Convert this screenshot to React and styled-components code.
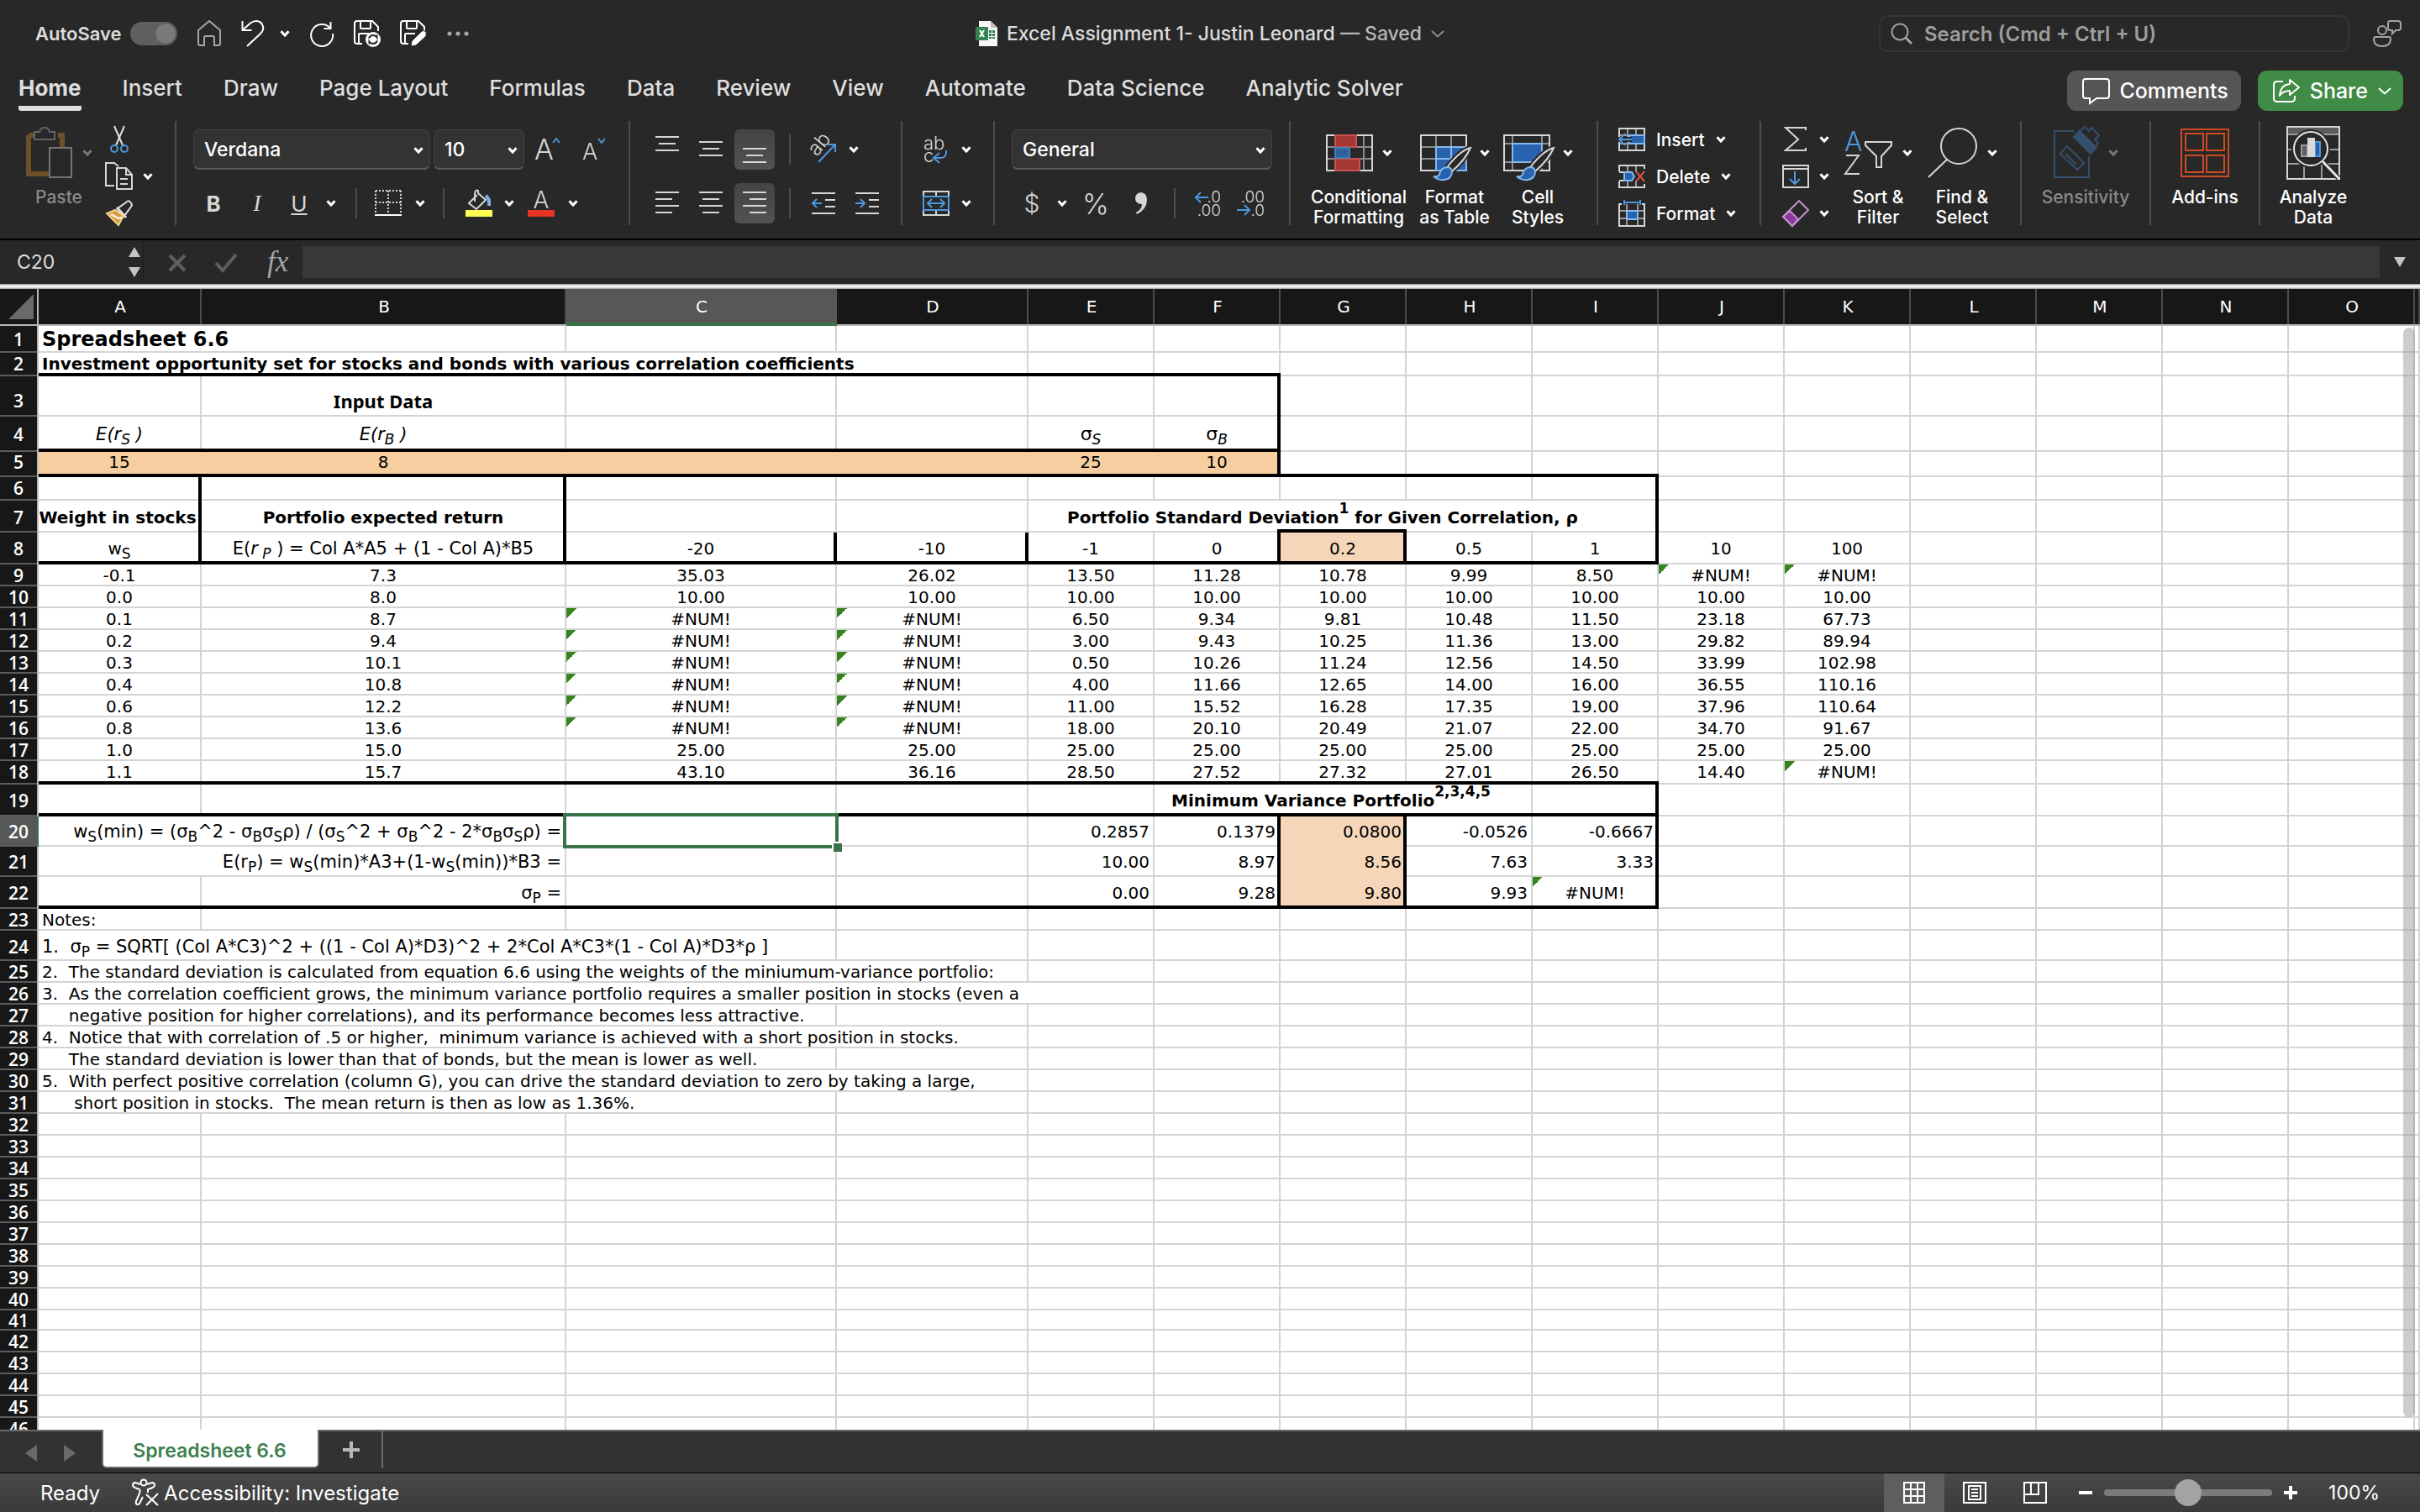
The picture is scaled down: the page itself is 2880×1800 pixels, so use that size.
import React from "react";
import styled, { createGlobalStyle, css } from "styled-components";

const UI_FONT = `Inter, "Liberation Sans", sans-serif`;
const SHEET_FONT = `"DejaVu Sans", "Liberation Sans", sans-serif`;
const BLUE = "#4f97dc";
const LIGHT = "#d6d6d6";
const GREEN = "#39734a";
const GRID = "#d4d4d4";

const GlobalStyle = createGlobalStyle`
  *, *::before, *::after {
    box-sizing: border-box;
  }
  body {
    margin: 0;
    background: #282828;
  }
  button, input, select {
    font: inherit;
    color: inherit;
    margin: 0;
    padding: 0;
    border: none;
    background: none;
  }
  svg {
    display: block;
    flex: none;
    overflow: visible;
  }
`;

const Window = styled.div`
  display: flex;
  flex-direction: column;
  height: 100vh;
  overflow: hidden;
  font-family: ${UI_FONT};
  color: #fff;
  background: #282828;
`;

/* ---------- title bar ---------- */

const TitleBar = styled.header`
  display: grid;
  grid-template-columns: 1fr auto 1fr;
  align-items: center;
  height: 80px;
  padding: 0 22px;
  color: #dcdcdc;
`;

const QuickAccess = styled.div`
  display: flex;
  align-items: center;
  gap: 23px;
  padding-left: 20px;
`;

const QuickButton = styled.button`
  display: flex;
  align-items: center;
  gap: 18px;
  height: 36px;
`;

const AutoSave = styled.label`
  display: flex;
  align-items: center;
  gap: 10px;
  font-size: 22px;
  font-weight: 600;
`;

const Switch = styled.input`
  appearance: none;
  display: flex;
  align-items: center;
  justify-content: flex-end;
  width: 56px;
  height: 28px;
  padding: 0 1px;
  border-radius: 14px;
  background: #5f5f5f;

  &::after {
    content: "";
    width: 26px;
    height: 26px;
    border-radius: 50%;
    background: #7a7a7a;
    border: 1px solid #555;
  }
`;

const DocumentName = styled.button`
  display: flex;
  align-items: center;
  gap: 11px;
  font-size: 23px;
  font-weight: 500;

  small {
    font-size: 23px;
    color: #b9b9b9;
  }
`;

const TitleRight = styled.div`
  display: flex;
  align-items: center;
  justify-content: flex-end;
  gap: 28px;
`;

const SearchBox = styled.label`
  display: flex;
  align-items: center;
  gap: 14px;
  width: 560px;
  height: 44px;
  padding: 0 12px;
  border: 2px solid #353535;
  border-radius: 10px;

  input {
    flex: 1;
    min-width: 0;
    font-size: 24px;
    font-weight: 600;
    outline: none;
  }
  input::placeholder {
    color: #9d9d9d;
    opacity: 1;
  }
`;

/* ---------- tabs ---------- */

const TabBar = styled.nav`
  display: flex;
  align-items: flex-start;
  height: 64px;
  padding: 0 20px 0 22px;
  gap: 49px;
`;

const RibbonTab = styled.button`
  height: 52px;
  font-size: 26px;
  line-height: 42px;
  padding-top: 4px;
  font-weight: ${({ $active }) => ($active ? 700 : 500)};
  color: #dedede;
  border-bottom: 6px solid ${({ $active }) => ($active ? "#dedede" : "transparent")};
  border-radius: 3px;
`;

const TabActions = styled.div`
  display: flex;
  gap: 20px;
  margin: 4px 0 0 auto;
`;

const ActionButton = styled.button`
  display: flex;
  align-items: center;
  gap: ${({ $green }) => ($green ? 12 : 11)}px;
  height: 48px;
  padding: 0 ${({ $green }) => ($green ? 14 : 15)}px 0 18px;
  border-radius: 11px;
  font-size: 25px;
  font-weight: 500;
  background: ${({ $green }) => ($green ? "#408b45" : "#555")};
`;

/* ---------- ribbon ---------- */

const Ribbon = styled.section`
  display: flex;
  height: 142px;
  padding-bottom: 16px;
  border-bottom: 2px solid #000;
`;

const Group = styled.div`
  display: flex;
  width: ${({ $w }) => $w}px;
  padding-left: ${({ $pad = 0 }) => $pad}px;
  justify-content: ${({ $center }) => ($center ? "center" : "flex-start")};
  gap: ${({ $gap = 0 }) => $gap}px;
  border-right: ${({ $last }) => ($last ? "none" : "2px solid #4d4d4d")};
`;

const TwoRows = styled.div`
  display: flex;
  flex-direction: column;
  gap: 16px;
  padding-top: 10px;
`;

const ThreeRows = styled.div`
  display: flex;
  flex-direction: column;

  > * {
    flex: none;
  }
`;

const ToolRow = styled.div`
  display: flex;
  align-items: center;
  height: ${({ $h = 48 }) => $h}px;
`;

const Tool = styled.button`
  display: flex;
  align-items: center;
  justify-content: center;
  width: ${({ $w }) => $w}px;
  height: 100%;
  font-size: ${({ $size = 26 }) => $size}px;
  font-weight: ${({ $weight = 300 }) => $weight};
  color: ${LIGHT};
  border-radius: 6px;
  ${({ $on }) =>
    $on &&
    css`
      background: linear-gradient(#444, #525252);
    `}
`;

const ItalicMark = styled.i`
  font-family: "Liberation Serif", serif;
  font-size: 28px;
`;

const Divider = styled.span`
  display: flex;
  justify-content: center;
  width: ${({ $w }) => $w}px;

  &::before {
    content: "";
    width: 2px;
    height: 36px;
    background: #4d4d4d;
  }
`;

const SelectBox = styled.span`
  position: relative;
  width: ${({ $w }) => $w}px;
  height: 48px;
  margin-right: ${({ $gap = 0 }) => $gap}px;

  select {
    appearance: none;
    width: 100%;
    height: 100%;
    padding: 0 12px;
    font-size: 23px;
    font-weight: 500;
    color: #fff;
    background: #333;
    border: 1px solid #414141;
    border-bottom: 2px solid #5a5a5a;
    border-radius: 7px;
  }
  svg {
    position: absolute;
    right: 8px;
    top: 21px;
    pointer-events: none;
  }
`;

const LineButton = styled.button`
  display: flex;
  align-items: center;
  gap: 13px;
  height: 44px;
  font-size: 21px;
  font-weight: 500;
`;

const BigButton = styled.button`
  display: flex;
  flex-direction: column;
  align-items: center;
  width: ${({ $w }) => $w}px;
  padding-top: 6px;
  font-size: 21px;
  line-height: 24px;
  font-weight: 500;
  text-align: center;
  color: ${({ $dim }) => ($dim ? "#8a8a8a" : "#fff")};

  span {
    flex: none;
  }
`;

const BigIcon = styled.span`
  display: flex;
  align-items: center;
  gap: 11px;
  height: 64px;
  margin-bottom: 9px;
`;

/* ---------- formula bar ---------- */

const FormulaBar = styled.section`
  display: flex;
  align-items: center;
  height: 52px;
`;

const NameBox = styled.div`
  display: flex;
  align-items: center;
  width: 172px;
  height: 50px;
  padding: 0 3px 0 20px;
  border-right: 2px solid #202020;
  font-size: 23px;

  input {
    flex: 1;
    min-width: 0;
    color: #dedede;
    outline: none;
  }
`;

const FormulaTools = styled.div`
  display: flex;
  align-items: center;
  justify-content: space-between;
  width: 188px;
  padding: 2px 12px 0 28px;
`;

const FormulaInput = styled.input`
  flex: 1;
  min-width: 0;
  height: 38px;
  padding: 0 8px;
  font-size: 22px;
  background: #383838;
  outline: none;
`;

const ExpandButton = styled.button`
  display: flex;
  justify-content: center;
  width: 48px;
`;

const Edge = styled.div`
  height: 6px;
  background: linear-gradient(#9a9a9a, #f4f4f4 40%, #f4f4f4 60%, #9a9a9a);
`;

/* ---------- sheet ---------- */

const SheetArea = styled.main`
  position: relative;
  flex: 1;
  min-height: 0;
  overflow: hidden;
  background: #fff;
`;

const SheetTable = styled.table`
  width: 100%;
  table-layout: fixed;
  border-collapse: separate;
  border-spacing: 0;
  font-family: ${SHEET_FONT};
  font-size: 20px;
  line-height: 22px;
  color: #000;
`;

const ColHead = styled.th`
  height: 44px;
  padding: 0 0 2px;
  font-size: 20px;
  font-weight: 400;
  color: #fff;
  background: ${({ $on }) => ($on ? "#575757" : "#171717")};
  box-shadow: ${({ $on }) =>
    $on ? `inset 0 -4px ${GREEN}` : "inset 0 -2px #b9b9b9, inset -2px 0 #4c4c4c"};
`;

const Corner = styled(ColHead)`
  box-shadow: inset 0 -2px #b9b9b9, inset -2px 0 #b9b9b9;
  padding: 0 5px 2px 10px;
`;

const RowHead = styled.th`
  height: ${({ $h }) => $h}px;
  padding: 0 2px ${({ $pad }) => $pad}px 0;
  vertical-align: bottom;
  font-family: "Open Sans", "Noto Sans", sans-serif;
  font-size: 21px;
  font-weight: 600;
  text-align: center;
  color: #fff;
  background: ${({ $on }) => ($on ? "#575757" : "#171717")};
  box-shadow: inset -2px 0 ${({ $on }) => ($on ? GREEN : "#b9b9b9")}, inset 0 -2px #5c5c5c;
`;

const Cell = styled.td`
  position: relative;
  padding: 0 ${({ $align, $shift }) => $shift || ($align === "center" ? 2 : 6)}px
    ${({ $pad }) => $pad}px ${({ $align }) => ($align === "center" ? 0 : 4)}px;
  vertical-align: bottom;
  white-space: pre;
  text-align: ${({ $align = "left" }) => $align};
  font-family: ${({ $font }) => $font};
  font-weight: ${({ $bold }) => ($bold ? 700 : 400)};
  font-size: ${({ $size = 20 }) => $size}px;
  background-color: ${({ $fill = "transparent" }) => $fill};
  box-shadow: ${({ $lines }) => $lines};
  ${({ $error }) =>
    $error &&
    css`
      background-image: linear-gradient(to bottom right, #37831f 50%, transparent 50%);
      background-size: 12px 12px;
      background-repeat: no-repeat;
    `}

  sub, sup {
    font-size: 17px;
    line-height: 0;
  }
  sup {
    vertical-align: 12px;
  }
`;

const Selection = styled.span`
  position: absolute;
  inset: -4px -2px -2px -4px;
  border: 4px solid ${GREEN};
  z-index: 1;

  &::after {
    content: "";
    position: absolute;
    right: -8px;
    bottom: -8px;
    width: 12px;
    height: 12px;
    background: ${GREEN};
    border: solid #fff;
    border-width: 2px 0 0 2px;
  }
`;

const TopEdge = styled.span`
  position: absolute;
  inset: -4px 0 auto -4px;
  height: 4px;
  background: #000;
`;

const ScrollThumb = styled.div`
  position: absolute;
  top: 46px;
  right: 6px;
  bottom: 15px;
  width: 14px;
  border-radius: 7px;
  background: rgba(150, 150, 150, 0.48);
`;

/* ---------- bottom bars ---------- */

const SheetTabs = styled.nav`
  display: flex;
  height: 52px;
  background: #323232;
  border-bottom: 1px solid #000;
`;

const TabNav = styled.div`
  display: flex;
  align-items: center;
  gap: 32px;
  width: 121px;
  padding: 2px 0 0 30px;
  border-top: 2px solid #6a6a6a;
`;

const SheetTab = styled.button`
  width: 259px;
  height: 46px;
  padding: 6px 2px 0 0;
  font-size: 23px;
  font-weight: 600;
  color: #3d8050;
  background: #fff;
  border: 2px solid #6a6a6a;
  border-top: none;
  border-radius: 0 0 6px 6px;
`;

const AddSheet = styled.div`
  flex: 1;
  border-top: 2px solid #6a6a6a;

  button {
    display: flex;
    align-items: center;
    justify-content: center;
    width: 76px;
    height: 44px;
    padding-left: 2px;
    border-right: 2px solid #6a6a6a;
  }
`;

const StatusBar = styled.footer`
  display: flex;
  align-items: stretch;
  height: 46px;
  padding: 0 48px;
  font-size: 24px;
  background: linear-gradient(#494949, #3a3a3a);
`;

const StatusText = styled.span`
  display: flex;
  align-items: center;
  gap: 6px;
  margin-right: 38px;
`;

const ViewButtons = styled.div`
  display: flex;
  margin-left: auto;
`;

const ViewButton = styled.button`
  display: flex;
  align-items: center;
  justify-content: center;
  width: 72px;
  background: ${({ $on }) => ($on ? "#5e5e5e" : "transparent")};
`;

const Zoom = styled.div`
  display: flex;
  align-items: center;
  gap: 14px;
  margin-left: 16px;

  input {
    appearance: none;
    width: 200px;
    height: 8px;
    border-radius: 4px;
    background: #7b7b7b;
  }
  input::-webkit-slider-thumb {
    appearance: none;
    width: 32px;
    height: 32px;
    border-radius: 50%;
    background: #a3a3a3;
  }
  output {
    width: 64px;
    margin-left: 20px;
    text-align: right;
    font-size: 23px;
  }
`;

/* ---------- icons ---------- */

const Svg = ({ w, h, children, stroke = LIGHT, sw = 2, ...rest }) => (
  <svg
    width={w}
    height={h}
    viewBox={`0 0 ${w} ${h}`}
    fill="none"
    stroke={stroke}
    strokeWidth={sw}
    aria-hidden="true"
    {...rest}
  >
    {children}
  </svg>
);

const Chevron = ({ color = "#fff", thin }) => (
  <Svg w={thin ? 16 : 12} h={8} stroke={color} sw={thin ? 2 : 3}>
    <path d={thin ? "M1 1l7 6.500 7-6.500" : "M1.500 1.200L6 6l4.500-4.800"} />
  </Svg>
);

const HomeIcon = () => (
  <Svg w={30} h={32} stroke="#a5a5a5">
    <path d="M2 12L15 1l13 11v16q0 2-2 2h-5v-9q0-2-2-2h-8q-2 0-2 2v9H4q-2 0-2-2z" />
  </Svg>
);

const UndoIcon = () => (
  <Svg w={28} h={32} stroke="#fff">
    <path d="M1.500 1v11h11M2 11.500L11 3.500C16 0 22 0 25 5c2.500 4.500 1 8-2 11L7 31" />
  </Svg>
);

const RedoIcon = () => (
  <Svg w={30} h={30} stroke="#fff">
    <path d="M25.500 1v8h-8M25 8.500A13 13 0 1 0 28 15" />
  </Svg>
);

const SaveBase = () => (
  <path d="M10 28H4q-3 0-3-3V4q0-3 3-3h18l7 7v5M8 1v8q0 1 1 1h10q1 0 1-1V1M6 28V17q0-1 1-1h11" />
);

const SaveSyncIcon = () => (
  <Svg w={32} h={32} stroke="#fff">
    <SaveBase />
    <circle cx="23" cy="23" r="9" fill="#fff" stroke="none" />
    <path d="M18 21.500q1.500-3.500 5-3.500 3 0 4.500 2.500v-3M28 24.500q-1.500 3.500-5 3.500-3 0-4.500-2.500v3" stroke="#282828" />
  </Svg>
);

const SaveEditIcon = () => (
  <Svg w={32} h={32} stroke="#fff">
    <SaveBase />
    <path d="M26 13L14 25l-1 6 6-1 12-11q1-5-1-6-2-1-4 0z" fill="#fff" stroke="#282828" strokeWidth="1" />
  </Svg>
);

const DotsIcon = () => (
  <Svg w={28} h={8} stroke="none">
    <circle cx="4" cy="4" r="2.600" fill="#a5a5a5" />
    <circle cx="14" cy="4" r="2.600" fill="#a5a5a5" />
    <circle cx="24" cy="4" r="2.600" fill="#a5a5a5" />
  </Svg>
);

const FileIcon = () => (
  <Svg w={26} h={30} stroke="none">
    <path d="M4 0h14l8 8v22H4z" fill="#f6f6f6" />
    <path d="M18 0v8h8z" fill="#bdbdbd" />
    <path d="M16 11h3v3h-3zM20 11h3v3h-3zM16 15h3v3h-3zM20 15h3v3h-3zM16 19h3v2h-3zM20 19h3v2h-3z" fill="#2f7d4c" />
    <rect x="0" y="7" width="15" height="16" rx="1" fill="#358350" />
    <path d="M5 11l5 8M10 11l-5 8" stroke="#fff" strokeWidth="2" />
  </Svg>
);

const SearchIcon = () => (
  <Svg w={26} h={26} stroke="#a5a5a5">
    <circle cx="11" cy="11" r="9.500" />
    <path d="M18 18l7 7" strokeWidth="3" />
  </Svg>
);

const PresenceIcon = () => (
  <Svg w={34} h={32} stroke="#a5a5a5">
    <circle cx="11" cy="12" r="5" />
    <path d="M3 20h16q2 0 2 2c0 6-4 9-10 9s-10-3-10-9q0-2 2-2z" />
    <path d="M20 1h10q3 0 3 3v5q0 3-3 3h-3l-4 4v-4h-3q-2 0-2-3V4q0-3 2-3z" />
  </Svg>
);

const CommentIcon = () => (
  <Svg w={33} h={32} stroke="#fff">
    <path d="M4 2h25q3 0 3 3v17q0 3-3 3H17l-8 6v-6H4q-3 0-3-3V5q0-3 3-3z" />
  </Svg>
);

const ShareIcon = () => (
  <Svg w={32} h={30} stroke="#fff">
    <path d="M12 4H5q-4 0-4 4v16q0 4 4 4h17q4 0 4-4v-3" />
    <path d="M20 2l11 9-11 9v-5q-8 0-12 6 1-13 12-14z" strokeLinejoin="round" />
  </Svg>
);

const PasteIcon = () => (
  <Svg w={56} h={62}>
    <path d="M3 10v46h24M10 10H3M38 10h5v14" stroke="#6d5028" strokeWidth="6" />
    <path d="M10 6h6q1-5 6-5t6 5h6v9H10z" fill="#282828" stroke="#646464" />
    <rect x="28" y="25" width="26" height="35" fill="#282828" stroke="#747474" />
  </Svg>
);

const CutIcon = () => (
  <Svg w={22} h={34}>
    <path d="M5 1l10 23M17 1L7 24" stroke="#e0e0e0" />
    <circle cx="5" cy="28" r="4" stroke={BLUE} />
    <circle cx="17" cy="28" r="4" stroke={BLUE} />
  </Svg>
);

const CopyIcon = () => (
  <Svg w={34} h={34}>
    <path d="M11 28H1V1h10l5 4" />
    <path d="M14 7h11l7 8v17H14zM25 7v8h7M18 20h9M18 26h9" />
  </Svg>
);

const BrushIcon = () => (
  <Svg w={32} h={32}>
    <path d="M14 10l8 9L30 8q2-3-1-5.500t-5 .5z" stroke="#e0e0e0" />
    <path d="M13 9l11 12" stroke="#e0e0e0" strokeWidth="3" />
    <path d="M11 12L1 16l14 14 6-11z" fill="#d99441" stroke="#f2d58a" />
    <path d="M6 17l9 5 4-1" stroke="#fbeec4" strokeWidth="3" />
  </Svg>
);

const Lines = ({ rows, stroke = LIGHT }) => (
  <Svg w={28} h={32} stroke={stroke}>
    {rows.map(([x, y, len]) => (
      <path key={y} d={`M${x} ${y}h${len}`} />
    ))}
  </Svg>
);

const BordersIcon = () => (
  <Svg w={32} h={32}>
    <path d="M1 1h30M1 15h30M1 1v26M16 1v26M31 1v26" strokeDasharray="2 2" />
    <path d="M0 30h32" stroke="#fff" />
  </Svg>
);

const FillIcon = () => (
  <Svg w={34} h={34}>
    <path d="M15 7L5 17l9 7L25 13 16 5V2q-3-2-4 3v10" />
    <path d="M25 8q5 3 4 12" stroke="#7fb3e6" strokeWidth="4" />
    <path d="M1 29h32" stroke="#fdfd54" strokeWidth="8" />
  </Svg>
);

const SvgText = ({ x, y, size, fill = LIGHT, weight = 300, children, ...rest }) => (
  <text
    x={x}
    y={y}
    fill={fill}
    stroke="none"
    fontFamily={UI_FONT}
    fontSize={size}
    fontWeight={weight}
    {...rest}
  >
    {children}
  </text>
);

const FontColorIcon = () => (
  <Svg w={34} h={34}>
    <SvgText x={17} y={23} size={28} textAnchor="middle">A</SvgText>
    <path d="M1 29h32" stroke="#e93323" strokeWidth="8" />
  </Svg>
);

const GrowIcon = () => (
  <Svg w={32} h={32}>
    <SvgText x={0} y={28} size={34}>A</SvgText>
    <path d="M22 8l4-5 4 5" stroke={BLUE} />
  </Svg>
);

const ShrinkIcon = () => (
  <Svg w={28} h={32}>
    <SvgText x={0} y={28} size={27}>A</SvgText>
    <path d="M19 3l4 5 4-5" stroke={BLUE} />
  </Svg>
);

const OrientIcon = () => (
  <Svg w={34} h={34}>
    <SvgText x={9} y={26} size={24} transform="rotate(-50 9 26)">ab</SvgText>
    <path d="M11 32L31 11M22 11h9v9" stroke={BLUE} />
  </Svg>
);

const WrapIcon = () => (
  <Svg w={30} h={34}>
    <SvgText x={0} y={17} size={22}>ab</SvgText>
    <SvgText x={0} y={32} size={22}>c</SvgText>
    <path d="M27 18q1 9-7 9h-7M19 21l-7 6 7 6" stroke={BLUE} />
  </Svg>
);

const MergeIcon = () => (
  <Svg w={32} h={32}>
    <path d="M1 8V2h30v6M16 2v6M1 24v6h30v-6M16 24v6" />
    <path d="M1 8h30v16H1zM6 16h20M11 11l-5 5 5 5M21 11l5 5-5 5" stroke={BLUE} />
  </Svg>
);

const IndentIcon = ({ out }) => (
  <Svg w={28} h={32}>
    <path d="M0 4h28M16 12h12M16 20h12M0 28h28" />
    <path d={out ? "M12 16H1M6 11l-5 5 5 5" : "M0 16h11M6 11l5 5-5 5"} stroke={BLUE} />
  </Svg>
);

const CommaIcon = () => (
  <Svg w={16} h={28} stroke="none">
    <path d="M8 1q7 1 7 9 0 11-12 17l-1-2q7-4 7-10Q1 15 1 8q0-6 7-7z" fill={LIGHT} />
  </Svg>
);

const DecimalIcon = ({ more }) => (
  <Svg w={32} h={34}>
    <SvgText x={31} y={16} size={19} textAnchor="end">{more ? ".0" : ".00"}</SvgText>
    <SvgText x={31} y={32} size={19} textAnchor="end">{more ? ".00" : ".0"}</SvgText>
    {more ? (
      <path d="M16 10H1M7 4l-6 6 6 6" stroke={BLUE} />
    ) : (
      <path d="M-2 25h15M7 19l6 6-6 6" stroke={BLUE} />
    )}
  </Svg>
);

const ConditionalIcon = () => (
  <Svg w={56} h={44}>
    <path d="M1 15h54M1 29h54M11 1v42M45 1v42M36 1v42" stroke="#8c8c8c" />
    <rect x="1" y="1" width="54" height="42" />
    <rect x="11" y="1" width="25" height="14" fill="#a23733" stroke="#c9524d" />
    <rect x="11" y="29" width="29" height="14" fill="#a23733" stroke="#c9524d" />
    <rect x="11" y="16" width="17" height="12" fill="#30619a" stroke="#3f7fb8" />
    <rect x="29" y="16" width="14" height="12" fill="#282828" stroke="none" />
  </Svg>
);

const PaintBrush = () => (
  <>
    <path d="M60 16q-12 3-27 22l5 6Q54 30 60 16z" fill="#282828" stroke="#282828" strokeWidth="6" />
    <path d="M60 16q-12 3-27 22l5 6Q54 30 60 16z" fill="#282828" stroke="#d6d6d6" />
    <path d="M32 39q-8 1-9 9-2 3-7 2 6 5 13 4 9-1 9-10-1-5-6-5z" fill="#2962ae" stroke="#85b9ec" />
  </>
);

const FormatTableIcon = () => (
  <Svg w={60} h={44}>
    <path d="M1 15h54M1 29h54M19 1v42M37 1v42" stroke="#8c8c8c" />
    <rect x="1" y="1" width="54" height="42" />
    <path d="M19 15h36v28H19z" fill="#2962ae" stroke="#85b9ec" />
    <path d="M19 29h36M37 15v28" stroke="#85b9ec" />
    <PaintBrush />
  </Svg>
);

const CellStylesIcon = () => (
  <Svg w={60} h={44}>
    <path d="M1 11h54M1 33h54M11 1v42M46 1v42" stroke="#8c8c8c" />
    <rect x="1" y="1" width="54" height="42" />
    <path d="M11 11h35v22H11z" fill="#2962ae" stroke="#85b9ec" />
    <PaintBrush />
  </Svg>
);

const InsertIcon = () => (
  <Svg w={32} h={28}>
    <path d="M11 1v26M21 1v26M1 9h30M1 19h30" stroke="#9a9a9a" />
    <rect x="1" y="1" width="30" height="26" />
    <path d="M13 9h18v10H13z" fill="#2962ae" stroke="#85b9ec" />
    <path d="M16 14H0" stroke="#282828" strokeWidth="6" />
    <path d="M16 14H1M8 7l-7 7 7 7" stroke={BLUE} />
  </Svg>
);

const DeleteIcon = () => (
  <Svg w={32} h={28}>
    <path d="M11 1v8M21 1v8M11 19v8M21 19v8" stroke="#9a9a9a" />
    <path d="M1 8V1h30v4M1 9h6M1 20v7h30v-4M1 19h6" />
    <path d="M7 9h9l3 5-3 5H7z" fill="#2962ae" stroke="#85b9ec" />
    <path d="M21 8l10 12M31 8L21 20" stroke="#d9534f" />
  </Svg>
);

const FormatIcon = () => (
  <Svg w={32} h={32}>
    <path d="M10 5v26M23 5v26M1 13h30M1 22h30" stroke="#9a9a9a" />
    <path d="M4 5H1v26h30V5h-3" />
    <path d="M10 13h13v10H10z" fill="#2962ae" stroke="#85b9ec" />
    <path d="M7 3h19M7 0v6M26 0v6" stroke={BLUE} />
  </Svg>
);

const SumIcon = () => (
  <Svg w={26} h={30}>
    <path d="M25 4V1H1l15 14L1 28h24v-3" />
  </Svg>
);

const FillDownIcon = () => (
  <Svg w={32} h={28}>
    <path d="M1 1h30v26H1zM1 5h30" />
    <path d="M15 8v15M9 17l6 6 6-6" stroke={BLUE} />
  </Svg>
);

const EraserIcon = () => (
  <Svg w={32} h={32} stroke="#c98ed0">
    <path d="M20 1l11 11-19 19L1 20z" />
    <path d="M9 13L1 20l11 11 7-8z" fill="#8b3a9b" />
  </Svg>
);

const SortIcon = () => (
  <Svg w={58} h={56}>
    <SvgText x={0} y={26} size={32} fill={BLUE}>A</SvgText>
    <path d="M2 31h15L1 53h17" />
    <path d="M25 15h31v4L44 32v13h-6V32L25 19z" />
  </Svg>
);

const FindIcon = () => (
  <Svg w={60} h={60}>
    <circle cx="37" cy="22" r="21" />
    <path d="M23 38L1 59" />
  </Svg>
);

const SensitivityIcon = () => (
  <Svg w={54} h={60} stroke="#35506c">
    <path d="M24 4H1v55h41V34" />
    <path d="M8 31l8-9 20 20-8 8zM14 31l13 13" />
    <path d="M24 11l7-7 20 20-7 7z" fill="#35506c" />
    <path d="M31 4l6-5 5 5 3-4 9 9-5 5 4 5-6 6" />
  </Svg>
);

const AddInsIcon = () => (
  <Svg w={58} h={58} stroke="#cf4a22">
    <rect x="1" y="1" width="56" height="56" />
    <rect x="6" y="6" width="21" height="20" />
    <rect x="31" y="6" width="21" height="20" />
    <rect x="6" y="32" width="21" height="20" />
    <rect x="31" y="32" width="21" height="20" />
  </Svg>
);

const AnalyzeIcon = () => (
  <Svg w={64} h={64}>
    <rect x="1" y="1" width="62" height="9" fill="#5d5d5d" stroke="none" />
    <path d="M1 10h62M1 28h62M1 45h62M21 45v18M42 45v18" stroke="#9a9a9a" />
    <rect x="1" y="1" width="62" height="62" />
    <circle cx="29" cy="27" r="23" fill="#282828" stroke="none" />
    <circle cx="29" cy="27" r="20" stroke="#e6e6e6" />
    <path d="M43 42l19 20" strokeWidth="6" stroke="#282828" />
    <path d="M43 42l20 21" strokeWidth="3" stroke="#e6e6e6" />
    <rect x="18" y="23" width="7" height="13" fill="#5d5d5d" stroke="#9a9a9a" />
    <rect x="34" y="19" width="6" height="17" fill="#2962ae" stroke={BLUE} />
    <rect x="25" y="14" width="9" height="23" fill="#d9d9d9" stroke="none" />
  </Svg>
);

const Triangle = ({ dir, size = 14, color = "#c4c4c4" }) => {
  const shapes = {
    down: "M0 0h14L7 12z",
    left: "M14 0v20L0 10z",
    right: "M0 0v20l14-10z",
  };
  return (
    <Svg w={size} h={dir === "down" ? 12 : 20} stroke="none">
      <path d={shapes[dir]} fill={color} />
    </Svg>
  );
};

const AccessibilityIcon = () => (
  <Svg w={32} h={32} stroke="#fff">
    <circle cx="14" cy="4" r="3.500" />
    <path d="M10 6L4 4Q1 4 1 7t8 5q1 1 0 5l-4 9q-1 4 2 4 2 0 3-3l3-6M18 6l6-2q3 0 3 3t-8 5v4" />
    <path d="M17 18l14 13M31 17L17 31" />
  </Svg>
);

const NormalViewIcon = () => (
  <Svg w={26} h={26} stroke="#fff">
    <path d="M1 1h24v24H1zM1 9h24M1 17h24M9 1v24M17 1v24" />
  </Svg>
);

const PageViewIcon = () => (
  <Svg w={28} h={26} stroke="#fff">
    <path d="M1 1h26v24H1zM7 5h14v16H7zM10 9h8M10 13h8M10 17h8" />
  </Svg>
);

const BreakViewIcon = () => (
  <Svg w={28} h={26} stroke="#fff">
    <path d="M1 1h26v24H1zM1 15h17V1M9 1v14" />
  </Svg>
);

/* ---------- sheet data ---------- */

const COLUMNS = "ABCDEFGHIJKLMNO".split("");
const WIDTHS = { A: 194, B: 434, C: 322, D: 228 };

// [height, bottom padding] of the rows that are not the standard 26px
const ROW_SIZES = {
  1: [32, 5],
  2: [28, 4],
  3: [48, 8],
  4: [42, 10],
  5: [30, 7],
  6: [28, 4],
  7: [38, 7],
  8: [38, 8],
  18: [28, 4],
  19: [38, 8],
  20: [36, 7],
  21: [36, 7],
  22: [38, 8],
  24: [36, 6],
  41: [24, 1],
};

const THICK_BOTTOM = {
  2: "ABCDEF",
  4: "ABCDEF",
  5: "ABCDEFGHI",
  7: "G",
  8: "ABCDEFGHI",
  18: "ABCDEFGHI",
  19: "ABCDEFGHI",
  22: "ABCDEFGHI",
};

const THICK_RIGHT = {
  3: "F",
  4: "F",
  5: "F",
  6: "ABI",
  7: "ABI",
  8: "ABCDFGI",
  19: "I",
  20: "FGI",
  21: "FGI",
  22: "FGI",
};

const INPUT_FILL = "#f7ce9f";
const PICK_FILL = "#f5d6b8";

const c = (text, more) => ({ text, align: "center", ...more });
const r = (text, more) => ({ text, align: "right", ...more });
const note = (text, span, more) => ({ text, span, ...more });

const CELLS = {
  1: { A: { text: "Spreadsheet 6.6", span: 2, bold: true, size: 24 } },
  2: {
    A: {
      text: "Investment opportunity set for stocks and bonds with various correlation coefficients",
      span: 4,
      bold: true,
    },
  },
  3: { B: c("Input Data", { bold: true, size: 22, font: `"Noto Sans", sans-serif` }) },
  4: {
    A: c(<i>E(r<sub>S</sub> )</i>, { size: 21 }),
    B: c(<i>E(r<sub>B</sub> )</i>, { size: 21 }),
    E: c(<>σ<sub><i>S</i></sub></>, { size: 22 }),
    F: c(<>σ<sub><i>B</i></sub></>, { size: 22 }),
  },
  5: { A: c("15"), B: c("8"), E: c("25"), F: c("10") },
  7: {
    A: c("Weight in stocks", { bold: true, shift: 6 }),
    B: c("Portfolio expected return", { bold: true }),
    E: c(<>Portfolio Standard Deviation<sup>1</sup> for Given Correlation, ρ</>, {
      bold: true,
      span: 5,
      shift: 50,
    }),
  },
  8: {
    A: c(<>w<sub>S</sub></>),
    B: c(<>E(<i>r<sub> P</sub></i> ) = Col A*A5 + (1 - Col A)*B5</>, { size: 21 }),
    C: c("-20"),
    D: c("-10"),
    E: c("-1"),
    F: c("0"),
    G: c("0.2"),
    H: c("0.5"),
    I: c("1"),
    J: c("10"),
    K: c("100"),
  },
  19: {
    F: c(<>Minimum Variance Portfolio<sup>2,3,4,5</sup></>, { bold: true, span: 3, shift: 30 }),
  },
  20: {
    A: r(
      <>
        w<sub>S</sub>(min) = (σ<sub>B</sub>^2 - σ<sub>B</sub>σ<sub>S</sub>ρ) / (σ<sub>S</sub>^2 + σ
        <sub>B</sub>^2 - 2*σ<sub>B</sub>σ<sub>S</sub>ρ) =
      </>,
      { span: 2, size: 21 }
    ),
    E: r("0.2857"),
    F: r("0.1379"),
    G: r("0.0800"),
    H: r("-0.0526"),
    I: r("-0.6667"),
  },
  21: {
    A: r(<>E(r<sub>P</sub>) = w<sub>S</sub>(min)*A3+(1-w<sub>S</sub>(min))*B3 =</>, {
      span: 2,
      size: 21,
    }),
    E: r("10.00"),
    F: r("8.97"),
    G: r("8.56"),
    H: r("7.63"),
    I: r("3.33"),
  },
  22: {
    B: r(<>σ<sub>P</sub> =</>, { size: 21 }),
    E: r("0.00"),
    F: r("9.28"),
    G: r("9.80"),
    H: r("9.93"),
    I: c("#NUM!"),
  },
  23: { A: note("Notes:", 1) },
  24: {
    A: note(
      <>1.  σ<sub>P</sub> = SQRT[ (Col A*C3)^2 + ((1 - Col A)*D3)^2 + 2*Col A*C3*(1 - Col A)*D3*ρ ]</>,
      3,
      { size: 21 }
    ),
  },
  25: {
    A: note(
      "2.  The standard deviation is calculated from equation 6.6 using the weights of the miniumum-variance portfolio:",
      4
    ),
  },
  26: {
    A: note(
      "3.  As the correlation coefficient grows, the minimum variance portfolio requires a smaller position in stocks (even a",
      5
    ),
  },
  27: {
    A: note("     negative position for higher correlations), and its performance becomes less attractive.", 3),
  },
  28: {
    A: note(
      "4.  Notice that with correlation of .5 or higher,  minimum variance is achieved with a short position in stocks.",
      4
    ),
  },
  29: {
    A: note("     The standard deviation is lower than that of bonds, but the mean is lower as well.", 3),
  },
  30: {
    A: note(
      "5.  With perfect positive correlation (column G), you can drive the standard deviation to zero by taking a large,",
      4
    ),
  },
  31: { A: note("      short position in stocks.  The mean return is then as low as 1.36%.", 3) },
};

const RESULTS = `
-0.1 7.3 35.03 26.02 13.50 11.28 10.78 9.99 8.50 #NUM! #NUM!
0.0 8.0 10.00 10.00 10.00 10.00 10.00 10.00 10.00 10.00 10.00
0.1 8.7 #NUM! #NUM! 6.50 9.34 9.81 10.48 11.50 23.18 67.73
0.2 9.4 #NUM! #NUM! 3.00 9.43 10.25 11.36 13.00 29.82 89.94
0.3 10.1 #NUM! #NUM! 0.50 10.26 11.24 12.56 14.50 33.99 102.98
0.4 10.8 #NUM! #NUM! 4.00 11.66 12.65 14.00 16.00 36.55 110.16
0.6 12.2 #NUM! #NUM! 11.00 15.52 16.28 17.35 19.00 37.96 110.64
0.8 13.6 #NUM! #NUM! 18.00 20.10 20.49 21.07 22.00 34.70 91.67
1.0 15.0 25.00 25.00 25.00 25.00 25.00 25.00 25.00 25.00 25.00
1.1 15.7 43.10 36.16 28.50 27.52 27.32 27.01 26.50 14.40 #NUM!`;

RESULTS.trim()
  .split("\n")
  .forEach((line, i) => {
    CELLS[9 + i] = {};
    line.split(" ").forEach((value, j) => {
      CELLS[9 + i][COLUMNS[j]] = c(value);
    });
  });

const fillOf = (row, col) => {
  if (row === 5 && col <= "F") return INPUT_FILL;
  if (col === "G" && (row === 8 || (row >= 20 && row <= 22))) return PICK_FILL;
  return undefined;
};

// thick black edges lie over the thin grid lines; filled cells hide the grid
const linesOf = (row, first, last, filled) => {
  const lines = [];
  const bottom = (THICK_BOTTOM[row] || "").includes(first);
  const right = (THICK_RIGHT[row] || "").includes(last);
  if (bottom) lines.push("inset 0 -4px #000");
  if (right) lines.push("inset -4px 0 #000");
  if (!bottom && !filled) lines.push(`inset 0 -2px ${GRID}`);
  if (!right && !filled) lines.push(`inset -2px 0 ${GRID}`);
  return lines.join(", ") || "none";
};

const SheetRow = ({ row }) => {
  const [height, pad] = ROW_SIZES[row] || [26, 2];
  const data = CELLS[row] || {};
  const cells = [];
  for (let i = 0; i < COLUMNS.length; ) {
    const col = COLUMNS[i];
    const { text, span = 1, align, bold, size, shift, font } = data[col] || {};
    const last = COLUMNS[i + span - 1];
    const fill = fillOf(row, col);
    cells.push(
      <Cell
        key={col}
        colSpan={span}
        $pad={pad}
        $align={align}
        $bold={bold}
        $size={size}
        $shift={shift}
        $font={font}
        $fill={fill}
        $error={text === "#NUM!"}
        $lines={linesOf(row, col, last, fill)}
      >
        {text}
        {row === 8 && col === "G" && <TopEdge />}
        {row === 20 && col === "C" && <Selection />}
      </Cell>
    );
    i += span;
  }
  return (
    <tr>
      <RowHead scope="row" $h={height} $pad={pad} $on={row === 20}>
        {row}
      </RowHead>
      {cells}
      <Cell $lines={linesOf(row, "P", "P")} />
    </tr>
  );
};

const Sheet = () => (
  <SheetArea>
    <SheetTable>
      <colgroup>
        <col width="46" />
        {COLUMNS.map((col) => (
          <col key={col} width={WIDTHS[col] || 150} />
        ))}
        <col />
      </colgroup>
      <thead>
        <tr>
          <Corner aria-label="Select all">
            <Svg w={30} h={30} stroke="none">
              <path d="M30 0v30H0z" fill="#6a6a6a" />
            </Svg>
          </Corner>
          {COLUMNS.map((col) => (
            <ColHead key={col} scope="col" $on={col === "C"}>
              {col}
            </ColHead>
          ))}
          <ColHead aria-hidden="true" />
        </tr>
      </thead>
      <tbody>
        {Array.from({ length: 46 }, (_, i) => (
          <SheetRow key={i} row={i + 1} />
        ))}
      </tbody>
    </SheetTable>
    <ScrollThumb />
  </SheetArea>
);

/* ---------- ribbon parts ---------- */

const TABS = [
  "Home",
  "Insert",
  "Draw",
  "Page Layout",
  "Formulas",
  "Data",
  "Review",
  "View",
  "Automate",
  "Data Science",
  "Analytic Solver",
];

const Drop = ({ w, label }) => (
  <Tool $w={w} aria-label={label}>
    <Chevron />
  </Tool>
);

const Picker = ({ w, gap, label, value }) => (
  <SelectBox $w={w} $gap={gap}>
    <select aria-label={label} defaultValue={value}>
      <option>{value}</option>
    </select>
    <Chevron />
  </SelectBox>
);

const Big = ({ w, icon, label, drop, dim }) => (
  <BigButton $w={w} $dim={dim}>
    <BigIcon>
      {icon}
      {drop && <Chevron color={dim ? "#777" : "#fff"} />}
    </BigIcon>
    {label.split("|").map((part) => (
      <span key={part}>{part}</span>
    ))}
  </BigButton>
);

const RibbonBar = () => (
  <Ribbon>
    <Group $w={210} $pad={24} $gap={2}>
      <Big w={92} icon={<PasteIcon />} label="Paste" drop dim />
      <ThreeRows>
        <ToolRow $h={44}>
          <Tool $w={48} aria-label="Cut"><CutIcon /></Tool>
        </ToolRow>
        <ToolRow $h={44}>
          <Tool $w={48} aria-label="Copy"><CopyIcon /></Tool>
          <Drop w={20} label="Copy options" />
        </ToolRow>
        <ToolRow $h={44}>
          <Tool $w={48} aria-label="Format painter"><BrushIcon /></Tool>
        </ToolRow>
      </ThreeRows>
    </Group>

    <Group $w={540} $pad={20}>
      <TwoRows>
        <ToolRow>
          <Picker w={282} gap={4} label="Font" value="Verdana" />
          <Picker w={108} label="Font size" value="10" />
          <Tool $w={56} aria-label="Increase font size"><GrowIcon /></Tool>
          <Tool $w={54} aria-label="Decrease font size"><ShrinkIcon /></Tool>
        </ToolRow>
        <ToolRow>
          <Tool $w={48} $weight={700}>B</Tool>
          <Tool $w={56} $weight={400}><ItalicMark>I</ItalicMark></Tool>
          <Tool $w={44} $weight={400}><u>U</u></Tool>
          <Drop w={32} label="Underline options" />
          <Divider $w={28} />
          <Tool $w={48} aria-label="Borders"><BordersIcon /></Tool>
          <Drop w={28} label="Border options" />
          <Divider $w={28} />
          <Tool $w={56} aria-label="Fill colour"><FillIcon /></Tool>
          <Drop w={16} label="Fill colour options" />
          <Tool $w={60} aria-label="Font colour"><FontColorIcon /></Tool>
          <Drop w={16} label="Font colour options" />
        </ToolRow>
      </TwoRows>
    </Group>

    <Group $w={324} $pad={20}>
      <TwoRows>
        <ToolRow>
          <Tool $w={48} aria-label="Top align">
            <Lines rows={[[0, 1, 28], [4, 9, 20], [0, 17, 28]]} />
          </Tool>
          <Tool $w={56} aria-label="Middle align">
            <Lines rows={[[0, 7, 28], [4, 15, 20], [0, 23, 28]]} />
          </Tool>
          <Tool $w={48} $on aria-label="Bottom align">
            <Lines rows={[[0, 15, 28], [4, 23, 20], [0, 31, 28]]} />
          </Tool>
          <Divider $w={36} />
          <Tool $w={44} aria-label="Orientation"><OrientIcon /></Tool>
          <Drop w={28} label="Orientation options" />
        </ToolRow>
        <ToolRow>
          <Tool $w={48} aria-label="Align left">
            <Lines rows={[[0, 3, 28], [0, 11, 20], [0, 19, 28], [0, 27, 20]]} />
          </Tool>
          <Tool $w={56} aria-label="Centre">
            <Lines rows={[[0, 3, 28], [4, 11, 20], [0, 19, 28], [4, 27, 20]]} />
          </Tool>
          <Tool $w={48} $on aria-label="Align right">
            <Lines rows={[[0, 3, 28], [8, 11, 20], [0, 19, 28], [8, 27, 20]]} />
          </Tool>
          <Divider $w={36} />
          <Tool $w={44} aria-label="Decrease indent"><IndentIcon out /></Tool>
          <Tool $w={60} aria-label="Increase indent"><IndentIcon /></Tool>
        </ToolRow>
      </TwoRows>
    </Group>

    <Group $w={110} $pad={16}>
      <TwoRows>
        <ToolRow>
          <Tool $w={48} aria-label="Wrap text"><WrapIcon /></Tool>
          <Drop w={24} label="Wrap text options" />
        </ToolRow>
        <ToolRow>
          <Tool $w={48} aria-label="Merge and centre"><MergeIcon /></Tool>
          <Drop w={24} label="Merge options" />
        </ToolRow>
      </TwoRows>
    </Group>

    <Group $w={352} $pad={20}>
      <TwoRows>
        <ToolRow>
          <Picker w={310} label="Number format" value="General" />
        </ToolRow>
        <ToolRow>
          <Tool $w={48} $size={30}>$</Tool>
          <Drop w={24} label="Currency options" />
          <Tool $w={56} $size={34}>%</Tool>
          <Tool $w={52} aria-label="Comma style"><CommaIcon /></Tool>
          <Divider $w={28} />
          <Tool $w={52} aria-label="Increase decimal"><DecimalIcon more /></Tool>
          <Tool $w={52} aria-label="Decrease decimal"><DecimalIcon /></Tool>
        </ToolRow>
      </TwoRows>
    </Group>

    <Group $w={366} $pad={24}>
      <Big w={114} icon={<ConditionalIcon />} label="Conditional|Formatting" drop />
      <Big w={114} icon={<FormatTableIcon />} label="Format|as Table" drop />
      <Big w={84} icon={<CellStylesIcon />} label="Cell|Styles" drop />
    </Group>

    <Group $w={194} $pad={24}>
      <ThreeRows>
        <LineButton><InsertIcon />Insert<Chevron /></LineButton>
        <LineButton><DeleteIcon />Delete<Chevron /></LineButton>
        <LineButton><FormatIcon />Format<Chevron /></LineButton>
      </ThreeRows>
    </Group>

    <Group $w={310} $pad={20} $gap={6}>
      <ThreeRows>
        <ToolRow $h={44}>
          <Tool $w={42} aria-label="AutoSum"><SumIcon /></Tool>
          <Drop w={26} label="AutoSum options" />
        </ToolRow>
        <ToolRow $h={44}>
          <Tool $w={42} aria-label="Fill"><FillDownIcon /></Tool>
          <Drop w={26} label="Fill options" />
        </ToolRow>
        <ToolRow $h={44}>
          <Tool $w={42} aria-label="Clear"><EraserIcon /></Tool>
          <Drop w={26} label="Clear options" />
        </ToolRow>
      </ThreeRows>
      <Big w={90} icon={<SortIcon />} label="Sort &|Filter" drop />
      <Big w={98} icon={<FindIcon />} label="Find &|Select" drop />
    </Group>

    <Group $w={154} $center>
      <Big w={130} icon={<SensitivityIcon />} label="Sensitivity" drop dim />
    </Group>
    <Group $w={130} $center>
      <Big w={110} icon={<AddInsIcon />} label="Add-ins" />
    </Group>
    <Group $w={126} $center $last>
      <Big w={110} icon={<AnalyzeIcon />} label="Analyze|Data" />
    </Group>
  </Ribbon>
);

const App = () => (
  <>
    <GlobalStyle />
    <Window>
      <TitleBar>
        <QuickAccess>
          <AutoSave>
            AutoSave
            <Switch type="checkbox" />
          </AutoSave>
          <QuickButton aria-label="Home"><HomeIcon /></QuickButton>
          <QuickButton aria-label="Undo"><UndoIcon /><Chevron /></QuickButton>
          <QuickButton aria-label="Redo"><RedoIcon /></QuickButton>
          <QuickButton aria-label="Save"><SaveSyncIcon /></QuickButton>
          <QuickButton aria-label="Save as"><SaveEditIcon /></QuickButton>
          <QuickButton aria-label="More"><DotsIcon /></QuickButton>
        </QuickAccess>
        <DocumentName>
          <FileIcon />
          <span>
            Excel Assignment 1- Justin Leonard <small>— Saved</small>
          </span>
          <Chevron thin color="#8d8d8d" />
        </DocumentName>
        <TitleRight>
          <SearchBox>
            <SearchIcon />
            <input type="text" aria-label="Search" placeholder="Search (Cmd + Ctrl + U)" />
          </SearchBox>
          <QuickButton aria-label="Presence"><PresenceIcon /></QuickButton>
        </TitleRight>
      </TitleBar>

      <TabBar>
        {TABS.map((tab) => (
          <RibbonTab key={tab} $active={tab === "Home"}>
            {tab}
          </RibbonTab>
        ))}
        <TabActions>
          <ActionButton><CommentIcon />Comments</ActionButton>
          <ActionButton $green><ShareIcon />Share<Chevron thin /></ActionButton>
        </TabActions>
      </TabBar>

      <RibbonBar />

      <FormulaBar>
        <NameBox>
          <input aria-label="Name box" defaultValue="C20" />
          <Svg w={14} h={36} stroke="none">
            <path d="M0 12L7 0l7 12zM0 24h14L7 36z" fill="#c4c4c4" />
          </Svg>
        </NameBox>
        <FormulaTools>
          <button aria-label="Cancel">
            <Svg w={22} h={22} stroke="#5e5e5e" sw={4}><path d="M2 2l18 18M20 2L2 20" /></Svg>
          </button>
          <button aria-label="Enter">
            <Svg w={28} h={22} stroke="#5e5e5e" sw={4}><path d="M2 11l8 9L26 1" /></Svg>
          </button>
          <button aria-label="Insert function">
            <Svg w={32} h={32}>
              <SvgText
                x={2}
                y={26}
                size={35}
                fill="#a5a5a5"
                weight={400}
                fontStyle="italic"
                fontFamily="Liberation Serif, serif"
              >
                fx
              </SvgText>
            </Svg>
          </button>
        </FormulaTools>
        <FormulaInput aria-label="Formula" />
        <ExpandButton aria-label="Expand formula bar"><Triangle dir="down" /></ExpandButton>
      </FormulaBar>
      <Edge />

      <Sheet />

      <SheetTabs>
        <TabNav>
          <button aria-label="Previous sheet"><Triangle dir="left" color="#6a6a6a" /></button>
          <button aria-label="Next sheet"><Triangle dir="right" color="#6a6a6a" /></button>
        </TabNav>
        <SheetTab>Spreadsheet 6.6</SheetTab>
        <AddSheet>
          <button aria-label="Add sheet">
            <Svg w={20} h={20} stroke="#b8b8b8" sw={4}><path d="M10 0v20M0 10h20" /></Svg>
          </button>
        </AddSheet>
      </SheetTabs>

      <StatusBar>
        <StatusText>Ready</StatusText>
        <StatusText><AccessibilityIcon />Accessibility: Investigate</StatusText>
        <ViewButtons>
          <ViewButton $on aria-label="Normal view"><NormalViewIcon /></ViewButton>
          <ViewButton aria-label="Page layout view"><PageViewIcon /></ViewButton>
          <ViewButton aria-label="Page break view"><BreakViewIcon /></ViewButton>
        </ViewButtons>
        <Zoom>
          <button aria-label="Zoom out">
            <Svg w={16} h={16} stroke="#fff" sw={4}><path d="M0 8h16" /></Svg>
          </button>
          <input type="range" aria-label="Zoom" min="0" max="200" defaultValue="100" />
          <button aria-label="Zoom in">
            <Svg w={16} h={16} stroke="#fff" sw={4}><path d="M8 0v16M0 8h16" /></Svg>
          </button>
          <output>100%</output>
        </Zoom>
      </StatusBar>
    </Window>
  </>
);

export default App;
